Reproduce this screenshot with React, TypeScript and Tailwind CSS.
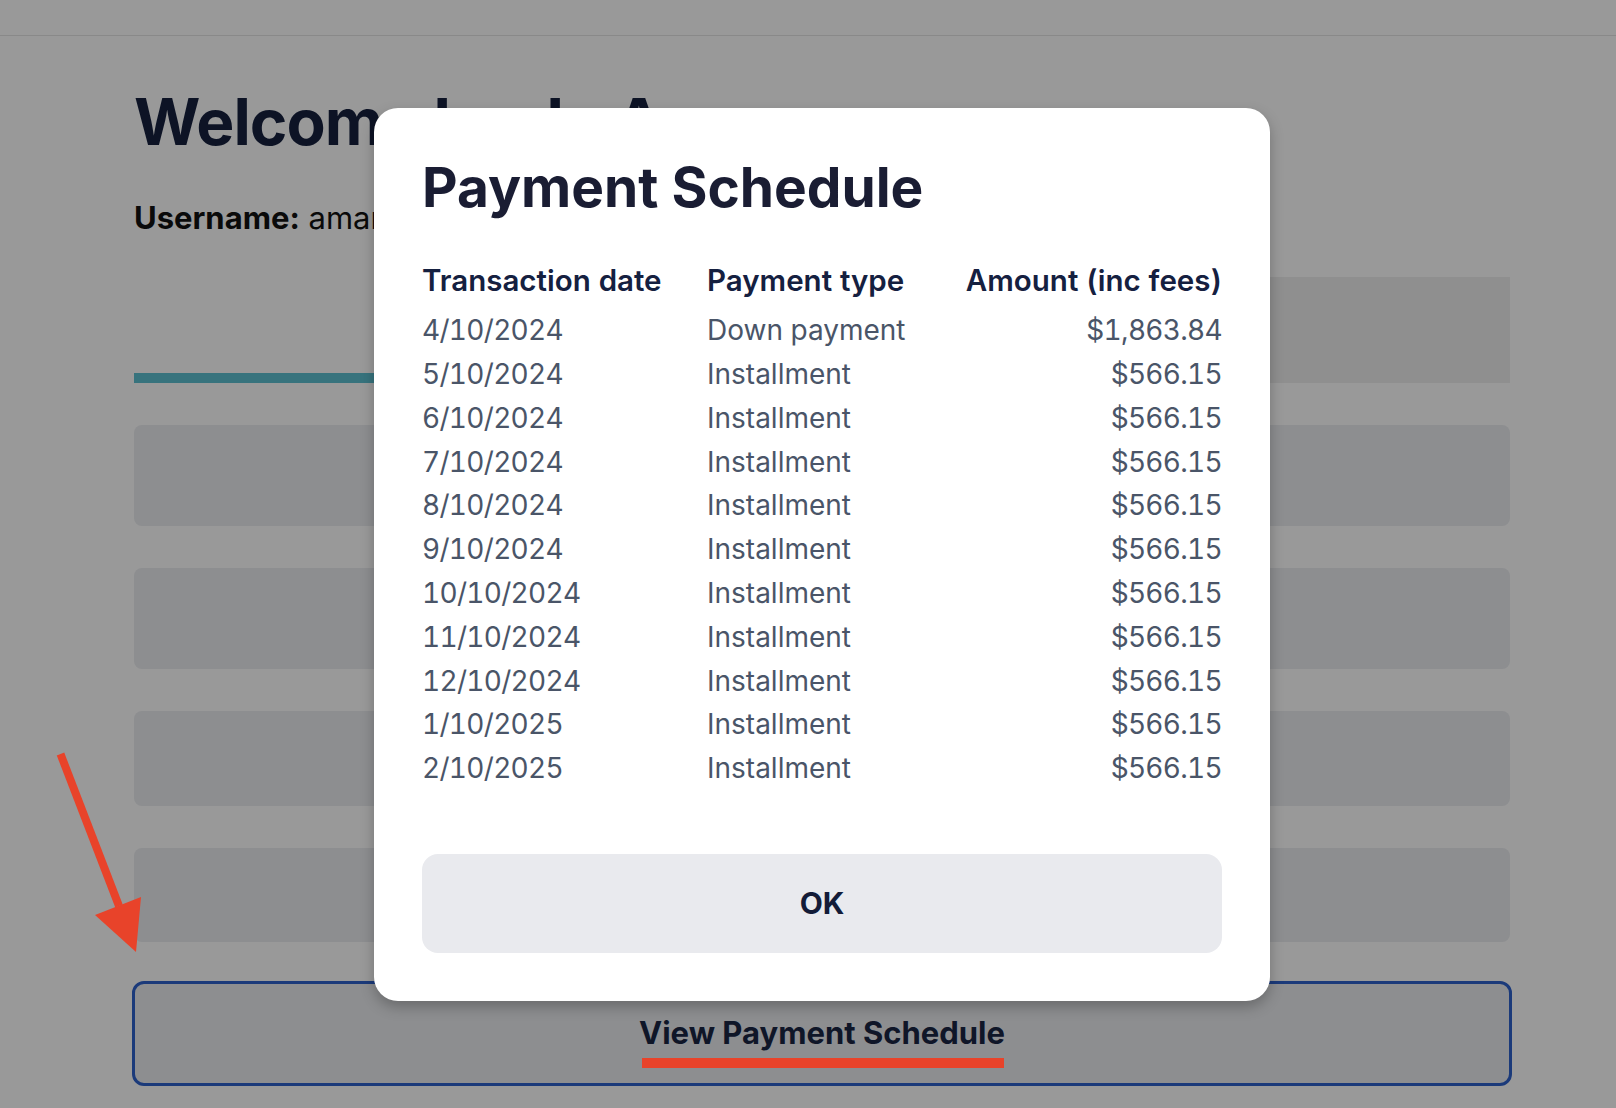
const schedule = [
  { date: '4/10/2024', type: 'Down payment', amount: '$1,863.84' },
  { date: '5/10/2024', type: 'Installment', amount: '$566.15' },
  { date: '6/10/2024', type: 'Installment', amount: '$566.15' },
  { date: '7/10/2024', type: 'Installment', amount: '$566.15' },
  { date: '8/10/2024', type: 'Installment', amount: '$566.15' },
  { date: '9/10/2024', type: 'Installment', amount: '$566.15' },
  { date: '10/10/2024', type: 'Installment', amount: '$566.15' },
  { date: '11/10/2024', type: 'Installment', amount: '$566.15' },
  { date: '12/10/2024', type: 'Installment', amount: '$566.15' },
  { date: '1/10/2025', type: 'Installment', amount: '$566.15' },
  { date: '2/10/2025', type: 'Installment', amount: '$566.15' },
];

export default function App() {
  return (
    <div className="relative h-[1108px] w-full overflow-hidden bg-white font-['Inter',sans-serif]">
      {/* page behind the dialog */}
      <div className="h-9 border-b border-[#e4e4e4]" />
      <main className="ml-[134px] w-[1376px]">
        <h1 className="mt-[54px] text-[64px] font-bold leading-none tracking-[-0.015em] text-[#16213f]">
          Welcome back, Amar
        </h1>
        <p className="mt-[48px] text-[31px] leading-none text-[#111]">
          <span className="font-bold">Username:</span> amar
        </p>
        <div className="mt-[44px] flex h-[106px]">
          <div className="flex-1 border-b-[10px] border-[#5cc0d0]" />
          <div className="flex-1 bg-[#eeeeee]" />
        </div>
        <div className="mt-[42px] flex flex-col gap-[42px]">
          <div className="h-[101px] rounded-lg bg-[#ebedf0]" />
          <div className="h-[101px] rounded-lg bg-[#ebedf0]" />
          <div className="h-[95px] rounded-lg bg-[#ebedf0]" />
          <div className="h-[94px] rounded-lg bg-[#ebedf0]" />
        </div>
        <button className="-mx-[2px] mt-[39px] flex h-[105px] w-[1380px] items-center justify-center rounded-xl border-[3px] border-[#2d61cc] bg-[#ebedf0] text-[31px] font-bold text-[#192544]">
          View Payment Schedule
        </button>
      </main>

      <div className="absolute inset-0 bg-black/40" />

      <div className="absolute left-[374px] top-[108px] w-[896px] rounded-3xl bg-white p-12 shadow-[0_6px_14px_rgba(0,0,0,0.25)]">
        <h2 className="text-[55px] font-bold leading-[62px] text-[#1a1d33]">Payment Schedule</h2>
        <table className="mt-10 w-full text-[28px] tabular-nums">
          <thead>
            <tr className="text-left text-[29.5px] text-[#152040]">
              <th className="h-[44px] w-[285px] font-semibold">Transaction date</th>
              <th className="font-semibold">Payment type</th>
              <th className="text-right font-semibold">Amount (inc fees)</th>
            </tr>
          </thead>
          <tbody className="text-[#4a5568]">
            <tr className="h-[6px]" />
            {schedule.map((row) => (
              <tr key={row.date} className="h-[43.8px]">
                <td className="tracking-[-0.025em]">{row.date}</td>
                <td>{row.type}</td>
                <td className="text-right tracking-[-0.025em]">{row.amount}</td>
              </tr>
            ))}
          </tbody>
        </table>
        <button className="mt-16 flex h-[99px] w-full items-center justify-center rounded-2xl bg-[#e9eaee] text-[30px] font-bold text-[#131c38]">
          OK
        </button>
      </div>

      {/* annotation marks */}
      <svg className="absolute left-[40px] top-[740px]" width="120" height="230" viewBox="0 0 120 230">
        <line x1="20.5" y1="14" x2="79" y2="166" stroke="#e8432a" strokeWidth="8" />
        <polygon points="55,175 101,157 96,212" fill="#e8432a" />
      </svg>
      <div className="absolute left-[642px] top-[1058px] h-[10px] w-[362px] bg-[#e8432a]" />
    </div>
  );
}
